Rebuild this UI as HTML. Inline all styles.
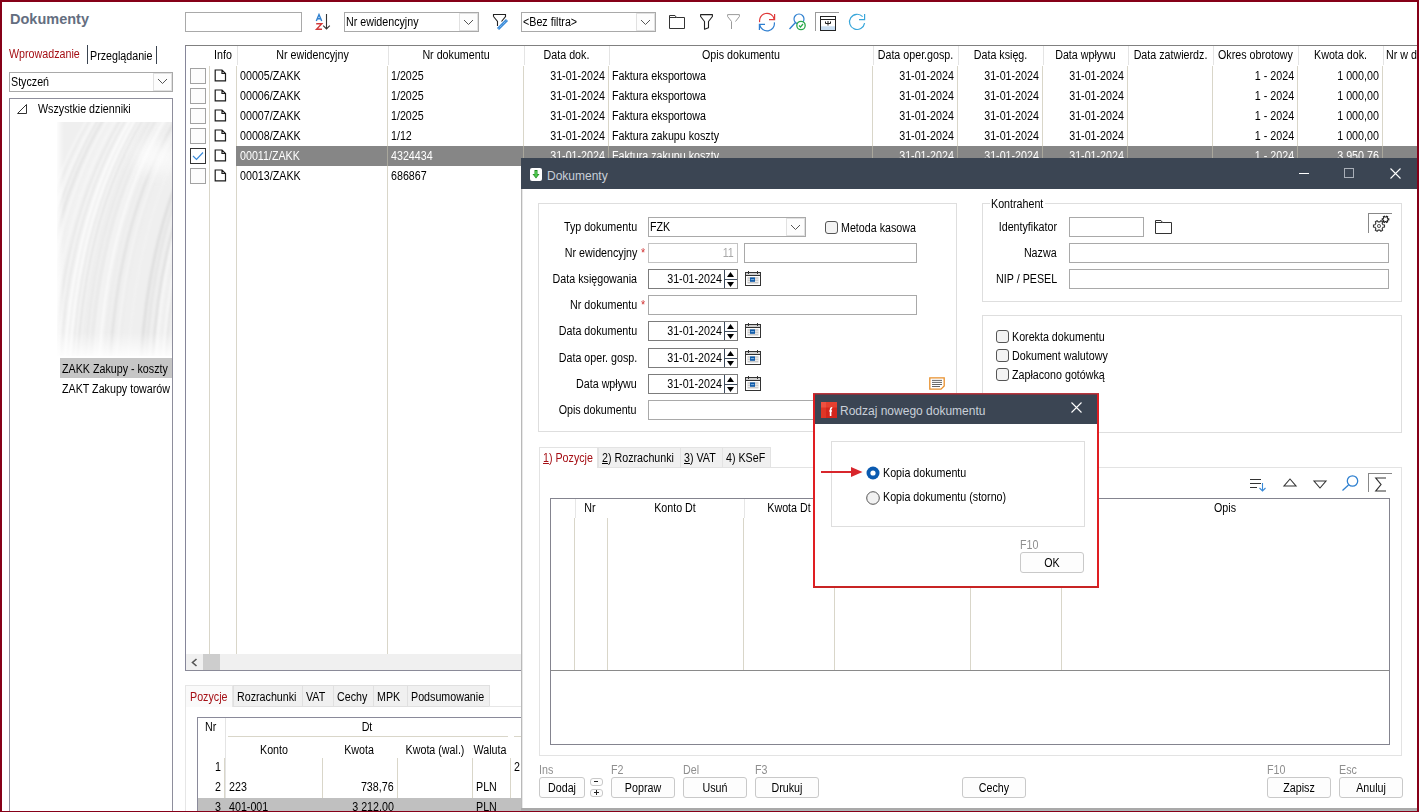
<!DOCTYPE html>
<html><head><meta charset="utf-8">
<style>
*{margin:0;padding:0;box-sizing:border-box}
html,body{width:1419px;height:812px;overflow:hidden;background:#fff}
body{position:relative;font-family:"Liberation Sans",sans-serif;font-size:11px;color:#000}
.a{position:absolute}
.t{position:absolute;white-space:nowrap;font-size:12.3px;line-height:14px;transform:scaleX(0.87);transform-origin:0 0}
.tr{transform-origin:100% 0}
.tc{transform-origin:50% 0}
.n{transform:none;font-size:12px;line-height:14px}
svg.a{overflow:visible}
</style></head><body>
<div class="t" style="top:12px;left:10px;color:#646e7f;font-size:14.5px;line-height:18px;font-weight:bold;transform:none;top:10px">Dokumenty</div>
<div class="t" style="top:47px;left:9px;color:#a50f15;">Wprowadzanie</div>
<div class="a" style="left:87px;top:45px;width:1px;height:19px;background:#3a4450;"></div>
<div class="t" style="top:49px;left:90px;">Przeglądanie</div>
<div class="a" style="left:156px;top:46px;width:1px;height:18px;background:#3a4450;"></div>
<div class="a" style="left:9px;top:72px;width:164px;height:20px;background:#fff;border:1px solid #a9a9a9;"></div>
<div class="a" style="left:153px;top:73px;width:19px;height:18px;background:#fdfdfd;border:1px solid #e1e1e1;"></div>
<svg class="a" style="left:157px;top:78px;" width="11" height="7" viewBox="0 0 11 7"><path d="M1 1 L5.5 5.5 L10 1" fill="none" stroke="#555" stroke-width="1"/></svg>
<div class="t" style="top:75px;left:11px;">Styczeń</div>
<div class="a" style="left:9px;top:98px;width:164px;height:730px;background:#fff;border:1px solid #8e8e9c;"></div>
<svg class="a" style="left:17px;top:104px;" width="11" height="10" viewBox="0 0 11 10"><path d="M9.5 0.5 L9.5 9.5 L0.5 9.5 Z" fill="none" stroke="#333" stroke-width="1"/></svg>
<div class="t" style="top:102px;left:38px;">Wszystkie dzienniki</div>
<svg class="a" style="left:57px;top:122px;overflow:hidden" width="115" height="234" viewBox="0 0 115 234"><defs><filter id="bl" filterUnits="userSpaceOnUse" x="-20" y="-20" width="155" height="274"><feGaussianBlur stdDeviation="0.8"/></filter><filter id="bl2" filterUnits="userSpaceOnUse" x="-20" y="-20" width="155" height="274"><feGaussianBlur stdDeviation="8"/></filter><linearGradient id="fl" x1="0" y1="0" x2="1" y2="0"><stop offset="0" stop-color="#fff" stop-opacity="0.8"/><stop offset="0.06" stop-color="#fff" stop-opacity="0"/></linearGradient><linearGradient id="fb" x1="0" y1="0" x2="0" y2="1"><stop offset="0" stop-color="#fff" stop-opacity="0"/><stop offset="0.9" stop-color="#fff" stop-opacity="0"/><stop offset="1" stop-color="#fff" stop-opacity="0.85"/></linearGradient></defs><rect width="115" height="234" fill="#efefef"/><g filter="url(#bl)"><path d="M15.1 240 Q23.1 90 85.1 -10" fill="none" stroke="#e0e0e0" stroke-width="1.23" opacity="0.38"/><path d="M99.6 240 Q107.6 90 169.6 -10" fill="none" stroke="#dadada" stroke-width="1.19" opacity="0.38"/><path d="M46.3 240 Q54.3 90 116.3 -10" fill="none" stroke="#dadada" stroke-width="0.74" opacity="0.58"/><path d="M0.9 240 Q8.9 90 70.9 -10" fill="none" stroke="#ffffff" stroke-width="1.28" opacity="0.80"/><path d="M-19.0 240 Q-11.0 90 51.0 -10" fill="none" stroke="#e0e0e0" stroke-width="1.61" opacity="0.67"/><path d="M-29.5 240 Q-21.5 90 40.5 -10" fill="none" stroke="#ffffff" stroke-width="1.23" opacity="0.89"/><path d="M-32.1 240 Q-24.1 90 37.9 -10" fill="none" stroke="#e0e0e0" stroke-width="1.06" opacity="0.43"/><path d="M-20.0 240 Q-12.0 90 50.0 -10" fill="none" stroke="#e4e4e4" stroke-width="1.50" opacity="0.73"/><path d="M-22.5 240 Q-14.5 90 47.5 -10" fill="none" stroke="#ffffff" stroke-width="1.62" opacity="0.55"/><path d="M53.1 240 Q61.1 90 123.1 -10" fill="none" stroke="#dadada" stroke-width="1.50" opacity="0.69"/><path d="M44.4 240 Q52.4 90 114.4 -10" fill="none" stroke="#ffffff" stroke-width="1.28" opacity="0.52"/><path d="M59.5 240 Q67.5 90 129.5 -10" fill="none" stroke="#ffffff" stroke-width="1.18" opacity="0.49"/><path d="M-9.4 240 Q-1.4 90 60.6 -10" fill="none" stroke="#e0e0e0" stroke-width="0.73" opacity="0.52"/><path d="M44.2 240 Q52.2 90 114.2 -10" fill="none" stroke="#e4e4e4" stroke-width="1.77" opacity="0.51"/><path d="M126.6 240 Q134.6 90 196.6 -10" fill="none" stroke="#dadada" stroke-width="1.42" opacity="0.44"/><path d="M18.1 240 Q26.1 90 88.1 -10" fill="none" stroke="#ffffff" stroke-width="1.27" opacity="0.88"/><path d="M-26.8 240 Q-18.8 90 43.2 -10" fill="none" stroke="#ffffff" stroke-width="1.52" opacity="0.83"/><path d="M13.3 240 Q21.3 90 83.3 -10" fill="none" stroke="#fafafa" stroke-width="1.16" opacity="0.62"/><path d="M95.5 240 Q103.5 90 165.5 -10" fill="none" stroke="#dadada" stroke-width="1.94" opacity="0.87"/><path d="M40.6 240 Q48.6 90 110.6 -10" fill="none" stroke="#fafafa" stroke-width="0.70" opacity="0.75"/><path d="M12.6 240 Q20.6 90 82.6 -10" fill="none" stroke="#ffffff" stroke-width="2.19" opacity="0.80"/><path d="M8.4 240 Q16.4 90 78.4 -10" fill="none" stroke="#ffffff" stroke-width="2.02" opacity="0.54"/><path d="M119.9 240 Q127.9 90 189.9 -10" fill="none" stroke="#e4e4e4" stroke-width="0.87" opacity="0.41"/><path d="M-30.0 240 Q-22.0 90 40.0 -10" fill="none" stroke="#e4e4e4" stroke-width="0.81" opacity="0.49"/><path d="M26.5 240 Q34.5 90 96.5 -10" fill="none" stroke="#ffffff" stroke-width="0.73" opacity="0.60"/><path d="M53.4 240 Q61.4 90 123.4 -10" fill="none" stroke="#e0e0e0" stroke-width="1.91" opacity="0.83"/><path d="M7.3 240 Q15.3 90 77.3 -10" fill="none" stroke="#ffffff" stroke-width="2.18" opacity="0.73"/><path d="M24.7 240 Q32.7 90 94.7 -10" fill="none" stroke="#e0e0e0" stroke-width="0.84" opacity="0.45"/><path d="M-0.6 240 Q7.4 90 69.4 -10" fill="none" stroke="#e0e0e0" stroke-width="0.62" opacity="0.81"/><path d="M-9.0 240 Q-1.0 90 61.0 -10" fill="none" stroke="#e4e4e4" stroke-width="0.61" opacity="0.58"/><path d="M22.8 240 Q30.8 90 92.8 -10" fill="none" stroke="#ffffff" stroke-width="1.11" opacity="0.42"/><path d="M106.1 240 Q114.1 90 176.1 -10" fill="none" stroke="#ffffff" stroke-width="1.65" opacity="0.76"/><path d="M37.6 240 Q45.6 90 107.6 -10" fill="none" stroke="#fafafa" stroke-width="1.88" opacity="0.57"/><path d="M27.8 240 Q35.8 90 97.8 -10" fill="none" stroke="#dadada" stroke-width="1.37" opacity="0.57"/><path d="M-7.6 240 Q0.4 90 62.4 -10" fill="none" stroke="#e0e0e0" stroke-width="1.31" opacity="0.41"/><path d="M62.1 240 Q70.1 90 132.1 -10" fill="none" stroke="#dadada" stroke-width="0.60" opacity="0.43"/><path d="M-22.8 240 Q-14.8 90 47.2 -10" fill="none" stroke="#e4e4e4" stroke-width="1.58" opacity="0.39"/><path d="M-4.6 240 Q3.4 90 65.4 -10" fill="none" stroke="#ffffff" stroke-width="0.84" opacity="0.49"/><path d="M19.1 240 Q27.1 90 89.1 -10" fill="none" stroke="#e4e4e4" stroke-width="1.36" opacity="0.41"/><path d="M43.0 240 Q51.0 90 113.0 -10" fill="none" stroke="#ffffff" stroke-width="1.37" opacity="0.52"/><path d="M-15.5 240 Q-7.5 90 54.5 -10" fill="none" stroke="#fafafa" stroke-width="1.15" opacity="0.50"/><path d="M100.9 240 Q108.9 90 170.9 -10" fill="none" stroke="#e0e0e0" stroke-width="1.43" opacity="0.46"/><path d="M121.8 240 Q129.8 90 191.8 -10" fill="none" stroke="#e4e4e4" stroke-width="0.83" opacity="0.65"/><path d="M-35.4 240 Q-27.4 90 34.6 -10" fill="none" stroke="#ffffff" stroke-width="1.08" opacity="0.70"/><path d="M-24.5 240 Q-16.5 90 45.5 -10" fill="none" stroke="#e4e4e4" stroke-width="1.43" opacity="0.85"/><path d="M20.5 240 Q28.5 90 90.5 -10" fill="none" stroke="#e0e0e0" stroke-width="1.45" opacity="0.78"/><path d="M16.0 240 Q24.0 90 86.0 -10" fill="none" stroke="#e0e0e0" stroke-width="1.58" opacity="0.78"/><path d="M88.9 240 Q96.9 90 158.9 -10" fill="none" stroke="#e0e0e0" stroke-width="1.89" opacity="0.80"/><path d="M85.8 240 Q93.8 90 155.8 -10" fill="none" stroke="#e0e0e0" stroke-width="0.92" opacity="0.62"/><path d="M84.3 240 Q92.3 90 154.3 -10" fill="none" stroke="#dadada" stroke-width="1.86" opacity="0.61"/><path d="M-7.1 240 Q0.9 90 62.9 -10" fill="none" stroke="#ffffff" stroke-width="2.13" opacity="0.60"/><path d="M119.3 240 Q127.3 90 189.3 -10" fill="none" stroke="#e4e4e4" stroke-width="2.13" opacity="0.55"/><path d="M-2.5 240 Q5.5 90 67.5 -10" fill="none" stroke="#e0e0e0" stroke-width="1.35" opacity="0.54"/><path d="M42.1 240 Q50.1 90 112.1 -10" fill="none" stroke="#ffffff" stroke-width="1.94" opacity="0.61"/><path d="M71.0 240 Q79.0 90 141.0 -10" fill="none" stroke="#fafafa" stroke-width="0.74" opacity="0.71"/><path d="M114.7 240 Q122.7 90 184.7 -10" fill="none" stroke="#fafafa" stroke-width="1.80" opacity="0.61"/><path d="M-9.7 240 Q-1.7 90 60.3 -10" fill="none" stroke="#fafafa" stroke-width="1.13" opacity="0.79"/><path d="M125.2 240 Q133.2 90 195.2 -10" fill="none" stroke="#ffffff" stroke-width="1.34" opacity="0.76"/><path d="M-25.6 240 Q-17.6 90 44.4 -10" fill="none" stroke="#e0e0e0" stroke-width="0.87" opacity="0.42"/><path d="M-14.3 240 Q-6.3 90 55.7 -10" fill="none" stroke="#ffffff" stroke-width="1.89" opacity="0.43"/><path d="M100.5 240 Q108.5 90 170.5 -10" fill="none" stroke="#ffffff" stroke-width="1.65" opacity="0.54"/><path d="M53.3 240 Q61.3 90 123.3 -10" fill="none" stroke="#e0e0e0" stroke-width="0.63" opacity="0.79"/><path d="M83.5 240 Q91.5 90 153.5 -10" fill="none" stroke="#dadada" stroke-width="1.44" opacity="0.86"/><path d="M33.7 240 Q41.7 90 103.7 -10" fill="none" stroke="#e0e0e0" stroke-width="1.92" opacity="0.47"/><path d="M2.8 240 Q10.8 90 72.8 -10" fill="none" stroke="#e4e4e4" stroke-width="1.40" opacity="0.77"/><path d="M15.4 240 Q23.4 90 85.4 -10" fill="none" stroke="#ffffff" stroke-width="1.27" opacity="0.42"/><path d="M114.7 240 Q122.7 90 184.7 -10" fill="none" stroke="#e4e4e4" stroke-width="2.04" opacity="0.71"/><path d="M98.6 240 Q106.6 90 168.6 -10" fill="none" stroke="#ffffff" stroke-width="1.27" opacity="0.85"/><path d="M45.3 240 Q53.3 90 115.3 -10" fill="none" stroke="#ffffff" stroke-width="0.84" opacity="0.63"/><path d="M108.4 240 Q116.4 90 178.4 -10" fill="none" stroke="#e0e0e0" stroke-width="1.57" opacity="0.78"/></g><ellipse cx="100" cy="35" rx="22" ry="16" fill="#fff" opacity="0.7" filter="url(#bl2)"/><rect width="115" height="234" fill="url(#fl)"/><rect width="115" height="234" fill="url(#fb)"/></svg>
<div class="a" style="left:60px;top:358px;width:112px;height:20px;background:#c6c6c6;"></div>
<div class="t" style="top:362px;left:62px;">ZAKK Zakupy - koszty</div>
<div class="t" style="top:382px;left:62px;">ZAKT Zakupy towarów</div>
<div class="a" style="left:185px;top:12px;width:117px;height:20px;background:#fff;border:1px solid #a9a9a9;"></div>
<svg class="a" style="left:315px;top:13px;" width="16" height="18" viewBox="0 0 16 18"><path d="M1.3 8 L4 1.5 L6.7 8 M2.2 5.8 H5.8" fill="none" stroke="#2f80d0" stroke-width="1.4"/><path d="M1.2 10.7 H6.8 L1.5 16.3 H7" fill="none" stroke="#d03a3a" stroke-width="1.4"/><path d="M11.5 1 V16 M8.2 12.7 L11.5 16 L14.8 12.7" fill="none" stroke="#333" stroke-width="1.1"/></svg>
<div class="a" style="left:344px;top:12px;width:135px;height:20px;background:#fff;border:1px solid #a9a9a9;"></div>
<div class="a" style="left:459px;top:13px;width:19px;height:18px;background:#fdfdfd;border:1px solid #e1e1e1;"></div>
<svg class="a" style="left:463px;top:19px;" width="11" height="7" viewBox="0 0 11 7"><path d="M1 1 L5.5 5.5 L10 1" fill="none" stroke="#555" stroke-width="1"/></svg>
<div class="t" style="top:15px;left:346px;">Nr ewidencyjny</div>
<svg class="a" style="left:492px;top:14px;" width="17" height="17" viewBox="0 0 17 17"><path d="M1.5 2.5 V0.5 H13.5 V2.5 L9.5 7.5 M1.5 2.5 L5.5 7.5 V12" fill="none" stroke="#222" stroke-width="1.1"/><path d="M6 15 L15 6" stroke="#3a8ad8" stroke-width="3"/><path d="M6.6 14.4 L14.4 6.6" stroke="#a8d8f8" stroke-width="0.8" stroke-dasharray="1 1"/></svg>
<div class="a" style="left:521px;top:12px;width:135px;height:20px;background:#fff;border:1px solid #a9a9a9;"></div>
<div class="a" style="left:636px;top:13px;width:19px;height:18px;background:#fdfdfd;border:1px solid #e1e1e1;"></div>
<svg class="a" style="left:640px;top:19px;" width="11" height="7" viewBox="0 0 11 7"><path d="M1 1 L5.5 5.5 L10 1" fill="none" stroke="#555" stroke-width="1"/></svg>
<div class="t" style="top:15px;left:523px;">&lt;Bez filtra&gt;</div>
<svg class="a" style="left:669px;top:15px;" width="16" height="14" viewBox="0 0 16 14"><path d="M0.5 13.5 V0.5 H6 L7.5 2.5 H15.5 V13.5 Z M0.5 2.5 H7.5" fill="none" stroke="#333" stroke-width="1"/></svg>
<svg class="a" style="left:700px;top:14px;" width="14" height="17" viewBox="0 0 14 17"><path d="M0.6 2.5 V0.6 H12.4 V2.5 L8.5 7.5 V13.8 L4.5 15.3 V7.5 Z" fill="none" stroke="#222" stroke-width="1.1" stroke-linejoin="round"/></svg>
<svg class="a" style="left:727px;top:14px;" width="14" height="17" viewBox="0 0 14 17"><path d="M0.6 2.5 V0.6 H12.4 V2.5 M0.6 2.5 L4.5 7.5 V15 M12.4 2.5 L8.5 7.5" fill="none" stroke="#9a9a9a" stroke-width="1" stroke-dasharray="20 0"/></svg>
<svg class="a" style="left:758px;top:13px;" width="18" height="18" viewBox="0 0 18 18"><path d="M1.7 9.2 A7.3 7.3 0 0 1 16.2 6.3" fill="none" stroke="#e03a3a" stroke-width="1.2"/><path d="M16.6 1 V6.6 H11" fill="none" stroke="#e03a3a" stroke-width="1.2"/><path d="M16.3 9.3 A7.3 7.3 0 0 1 1.8 11.8" fill="none" stroke="#2f7fd0" stroke-width="1.2"/><path d="M1.4 17 V11.4 H7" fill="none" stroke="#2f7fd0" stroke-width="1.2"/></svg>
<svg class="a" style="left:789px;top:13px;" width="17" height="18" viewBox="0 0 17 18"><circle cx="10" cy="6" r="5" fill="none" stroke="#2f80d0" stroke-width="1.2"/><path d="M6.5 9.5 L0.5 16" stroke="#2f80d0" stroke-width="1.3"/><circle cx="12" cy="12.5" r="4.2" fill="#fff" stroke="#2aa84a" stroke-width="1.3"/><path d="M10 12.5 L11.5 14 L14 11" fill="none" stroke="#2aa84a" stroke-width="1.2"/></svg>
<div class="a" style="left:815px;top:12px;width:1px;height:19px;background:#9a9a9a;"></div>
<div class="a" style="left:815px;top:12px;width:24px;height:1px;background:#9a9a9a;"></div>
<svg class="a" style="left:820px;top:16px;" width="16" height="15" viewBox="0 0 16 15"><rect x="0.5" y="0.5" width="15" height="14" fill="#fff" stroke="#222"/><rect x="1" y="10.3" width="14" height="3.7" fill="#c9def2"/><path d="M1 3.5 H15" stroke="#222"/><path d="M8 5 V9.5 M5.5 5.5 V7.5 H10.5 V5.5" fill="none" stroke="#222"/></svg>
<svg class="a" style="left:848px;top:13px;" width="18" height="18" viewBox="0 0 18 18"><path d="M14.6 3.6 A7.6 7.6 0 1 0 16.6 10.2" fill="none" stroke="#38a6da" stroke-width="1.2"/><path d="M16.6 1 V6.6 H11" fill="none" stroke="#38a6da" stroke-width="1.2"/></svg>
<div class="a" style="left:185px;top:45px;width:1240px;height:626px;background:#fff;border:1px solid #868699;border-right:none;border-top-color:#808080"></div>
<div class="a" style="left:237px;top:46px;width:1px;height:19px;background:#e4e4e4;"></div>
<div class="a" style="left:388px;top:46px;width:1px;height:19px;background:#e4e4e4;"></div>
<div class="a" style="left:524px;top:46px;width:1px;height:19px;background:#e4e4e4;"></div>
<div class="a" style="left:609px;top:46px;width:1px;height:19px;background:#e4e4e4;"></div>
<div class="a" style="left:873px;top:46px;width:1px;height:19px;background:#e4e4e4;"></div>
<div class="a" style="left:958px;top:46px;width:1px;height:19px;background:#e4e4e4;"></div>
<div class="a" style="left:1043px;top:46px;width:1px;height:19px;background:#e4e4e4;"></div>
<div class="a" style="left:1128px;top:46px;width:1px;height:19px;background:#e4e4e4;"></div>
<div class="a" style="left:1213px;top:46px;width:1px;height:19px;background:#e4e4e4;"></div>
<div class="a" style="left:1298px;top:46px;width:1px;height:19px;background:#e4e4e4;"></div>
<div class="a" style="left:1383px;top:46px;width:1px;height:19px;background:#e4e4e4;"></div>
<div class="a" style="left:209px;top:66px;width:1px;height:588px;background:#d9d6c9;"></div>
<div class="a" style="left:236px;top:66px;width:1px;height:588px;background:#d9d6c9;"></div>
<div class="a" style="left:387px;top:66px;width:1px;height:588px;background:#d9d6c9;"></div>
<div class="a" style="left:523px;top:66px;width:1px;height:588px;background:#d9d6c9;"></div>
<div class="a" style="left:608px;top:66px;width:1px;height:588px;background:#d9d6c9;"></div>
<div class="a" style="left:872px;top:66px;width:1px;height:588px;background:#d9d6c9;"></div>
<div class="a" style="left:957px;top:66px;width:1px;height:588px;background:#d9d6c9;"></div>
<div class="a" style="left:1042px;top:66px;width:1px;height:588px;background:#d9d6c9;"></div>
<div class="a" style="left:1127px;top:66px;width:1px;height:588px;background:#d9d6c9;"></div>
<div class="a" style="left:1212px;top:66px;width:1px;height:588px;background:#d9d6c9;"></div>
<div class="a" style="left:1297px;top:66px;width:1px;height:588px;background:#d9d6c9;"></div>
<div class="a" style="left:1382px;top:66px;width:1px;height:588px;background:#d9d6c9;"></div>
<div class="t tc" style="top:48px;left:199.0px;width:48px;text-align:center;">Info</div>
<div class="t tc" style="top:48px;left:227.0px;width:171px;text-align:center;">Nr ewidencyjny</div>
<div class="t tc" style="top:48px;left:378.0px;width:156px;text-align:center;">Nr dokumentu</div>
<div class="t tc" style="top:48px;left:514.0px;width:105px;text-align:center;">Data dok.</div>
<div class="t tc" style="top:48px;left:599.0px;width:284px;text-align:center;">Opis dokumentu</div>
<div class="t tc" style="top:48px;left:863.0px;width:105px;text-align:center;">Data oper.gosp.</div>
<div class="t tc" style="top:48px;left:948.0px;width:105px;text-align:center;">Data księg.</div>
<div class="t tc" style="top:48px;left:1033.0px;width:105px;text-align:center;">Data wpływu</div>
<div class="t tc" style="top:48px;left:1118.0px;width:105px;text-align:center;">Data zatwierdz.</div>
<div class="t tc" style="top:48px;left:1203.0px;width:105px;text-align:center;">Okres obrotowy</div>
<div class="t tc" style="top:48px;left:1288.0px;width:105px;text-align:center;">Kwota dok.</div>
<div class="t" style="top:48px;left:1386px;">Nr w d</div>
<div class="a" style="left:190px;top:68px;width:16px;height:16px;background:#fcfcfc;border:1px solid #a2a2a2;"></div>
<svg class="a" style="left:214px;top:69px;" width="13" height="13" viewBox="0 0 13 13"><path d="M1.2 1 H8 L11.5 4.5 V11.8 H1.2 Z M8 1 V4.5 H11.5" fill="none" stroke="#1a1a1a" stroke-width="1.2" stroke-linejoin="miter"/></svg>
<div class="t" style="top:69px;left:240px;">00005/ZAKK</div>
<div class="t" style="top:69px;left:391px;">1/2025</div>
<div class="t tr" style="top:69px;right:814px;">31-01-2024</div>
<div class="t" style="top:69px;left:612px;">Faktura eksportowa</div>
<div class="t tr" style="top:69px;right:465px;">31-01-2024</div>
<div class="t tr" style="top:69px;right:380px;">31-01-2024</div>
<div class="t tr" style="top:69px;right:295px;">31-01-2024</div>
<div class="t tr" style="top:69px;right:125px;">1 - 2024</div>
<div class="t tr" style="top:69px;right:40px;">1 000,00</div>
<div class="a" style="left:190px;top:88px;width:16px;height:16px;background:#fcfcfc;border:1px solid #a2a2a2;"></div>
<svg class="a" style="left:214px;top:89px;" width="13" height="13" viewBox="0 0 13 13"><path d="M1.2 1 H8 L11.5 4.5 V11.8 H1.2 Z M8 1 V4.5 H11.5" fill="none" stroke="#1a1a1a" stroke-width="1.2" stroke-linejoin="miter"/></svg>
<div class="t" style="top:89px;left:240px;">00006/ZAKK</div>
<div class="t" style="top:89px;left:391px;">1/2025</div>
<div class="t tr" style="top:89px;right:814px;">31-01-2024</div>
<div class="t" style="top:89px;left:612px;">Faktura eksportowa</div>
<div class="t tr" style="top:89px;right:465px;">31-01-2024</div>
<div class="t tr" style="top:89px;right:380px;">31-01-2024</div>
<div class="t tr" style="top:89px;right:295px;">31-01-2024</div>
<div class="t tr" style="top:89px;right:125px;">1 - 2024</div>
<div class="t tr" style="top:89px;right:40px;">1 000,00</div>
<div class="a" style="left:190px;top:108px;width:16px;height:16px;background:#fcfcfc;border:1px solid #a2a2a2;"></div>
<svg class="a" style="left:214px;top:109px;" width="13" height="13" viewBox="0 0 13 13"><path d="M1.2 1 H8 L11.5 4.5 V11.8 H1.2 Z M8 1 V4.5 H11.5" fill="none" stroke="#1a1a1a" stroke-width="1.2" stroke-linejoin="miter"/></svg>
<div class="t" style="top:109px;left:240px;">00007/ZAKK</div>
<div class="t" style="top:109px;left:391px;">1/2025</div>
<div class="t tr" style="top:109px;right:814px;">31-01-2024</div>
<div class="t" style="top:109px;left:612px;">Faktura eksportowa</div>
<div class="t tr" style="top:109px;right:465px;">31-01-2024</div>
<div class="t tr" style="top:109px;right:380px;">31-01-2024</div>
<div class="t tr" style="top:109px;right:295px;">31-01-2024</div>
<div class="t tr" style="top:109px;right:125px;">1 - 2024</div>
<div class="t tr" style="top:109px;right:40px;">1 000,00</div>
<div class="a" style="left:190px;top:128px;width:16px;height:16px;background:#fcfcfc;border:1px solid #a2a2a2;"></div>
<svg class="a" style="left:214px;top:129px;" width="13" height="13" viewBox="0 0 13 13"><path d="M1.2 1 H8 L11.5 4.5 V11.8 H1.2 Z M8 1 V4.5 H11.5" fill="none" stroke="#1a1a1a" stroke-width="1.2" stroke-linejoin="miter"/></svg>
<div class="t" style="top:129px;left:240px;">00008/ZAKK</div>
<div class="t" style="top:129px;left:391px;">1/12</div>
<div class="t tr" style="top:129px;right:814px;">31-01-2024</div>
<div class="t" style="top:129px;left:612px;">Faktura zakupu koszty</div>
<div class="t tr" style="top:129px;right:465px;">31-01-2024</div>
<div class="t tr" style="top:129px;right:380px;">31-01-2024</div>
<div class="t tr" style="top:129px;right:295px;">31-01-2024</div>
<div class="t tr" style="top:129px;right:125px;">1 - 2024</div>
<div class="t tr" style="top:129px;right:40px;">1 000,00</div>
<div class="a" style="left:236px;top:146px;width:1183px;height:20px;background:#868686;"></div>
<div class="a" style="left:387px;top:146px;width:1px;height:20px;background:#a9a79c;"></div>
<div class="a" style="left:523px;top:146px;width:1px;height:20px;background:#a9a79c;"></div>
<div class="a" style="left:608px;top:146px;width:1px;height:20px;background:#a9a79c;"></div>
<div class="a" style="left:872px;top:146px;width:1px;height:20px;background:#a9a79c;"></div>
<div class="a" style="left:957px;top:146px;width:1px;height:20px;background:#a9a79c;"></div>
<div class="a" style="left:1042px;top:146px;width:1px;height:20px;background:#a9a79c;"></div>
<div class="a" style="left:1127px;top:146px;width:1px;height:20px;background:#a9a79c;"></div>
<div class="a" style="left:1212px;top:146px;width:1px;height:20px;background:#a9a79c;"></div>
<div class="a" style="left:1297px;top:146px;width:1px;height:20px;background:#a9a79c;"></div>
<div class="a" style="left:1382px;top:146px;width:1px;height:20px;background:#a9a79c;"></div>
<div class="a" style="left:190px;top:148px;width:16px;height:16px;background:#fff;border:1px solid #333;"></div>
<svg class="a" style="left:192px;top:151px;" width="12" height="10" viewBox="0 0 12 10"><path d="M1 5 L4.5 8.5 L11 1.5" fill="none" stroke="#3a8ad8" stroke-width="1.2"/></svg>
<svg class="a" style="left:214px;top:149px;" width="13" height="13" viewBox="0 0 13 13"><path d="M1.2 1 H8 L11.5 4.5 V11.8 H1.2 Z M8 1 V4.5 H11.5" fill="none" stroke="#1a1a1a" stroke-width="1.2" stroke-linejoin="miter"/></svg>
<div class="t" style="top:149px;left:240px;color:#fff;">00011/ZAKK</div>
<div class="t" style="top:149px;left:391px;color:#fff;">4324434</div>
<div class="t tr" style="top:149px;right:814px;color:#fff;">31-01-2024</div>
<div class="t" style="top:149px;left:612px;color:#fff;">Faktura zakupu koszty</div>
<div class="t tr" style="top:149px;right:465px;color:#fff;">31-01-2024</div>
<div class="t tr" style="top:149px;right:380px;color:#fff;">31-01-2024</div>
<div class="t tr" style="top:149px;right:295px;color:#fff;">31-01-2024</div>
<div class="t tr" style="top:149px;right:125px;color:#fff;">1 - 2024</div>
<div class="t tr" style="top:149px;right:40px;color:#fff;">3 950,76</div>
<div class="a" style="left:190px;top:168px;width:16px;height:16px;background:#fcfcfc;border:1px solid #a2a2a2;"></div>
<svg class="a" style="left:214px;top:169px;" width="13" height="13" viewBox="0 0 13 13"><path d="M1.2 1 H8 L11.5 4.5 V11.8 H1.2 Z M8 1 V4.5 H11.5" fill="none" stroke="#1a1a1a" stroke-width="1.2" stroke-linejoin="miter"/></svg>
<div class="t" style="top:169px;left:240px;">00013/ZAKK</div>
<div class="t" style="top:169px;left:391px;">686867</div>
<div class="a" style="left:186px;top:654px;width:1233px;height:16px;background:#f0f0f0;"></div>
<div class="a" style="left:203px;top:654px;width:17px;height:16px;background:#cdcdcd;"></div>
<svg class="a" style="left:191px;top:658px;" width="7" height="9" viewBox="0 0 7 9"><path d="M5.5 1 L1.5 4.5 L5.5 8" fill="none" stroke="#555" stroke-width="1.6"/></svg>
<div class="a" style="left:185px;top:670px;width:1234px;height:1px;background:#8a8a98;"></div>
<div class="a" style="left:185px;top:685px;width:48px;height:22px;background:#fafafa;border:1px solid #e6e6e6;border-bottom:none"></div>
<div class="t" style="top:690px;left:190px;color:#a50f15;">Pozycje</div>
<div class="a" style="left:233px;top:685px;width:70px;height:22px;background:#f0f0f0;border:1px solid #e0e0e0;"></div>
<div class="t" style="top:690px;left:237px;">Rozrachunki</div>
<div class="a" style="left:302px;top:685px;width:32px;height:22px;background:#f0f0f0;border:1px solid #e0e0e0;"></div>
<div class="t" style="top:690px;left:306px;">VAT</div>
<div class="a" style="left:333px;top:685px;width:41px;height:22px;background:#f0f0f0;border:1px solid #e0e0e0;"></div>
<div class="t" style="top:690px;left:337px;">Cechy</div>
<div class="a" style="left:373px;top:685px;width:35px;height:22px;background:#f0f0f0;border:1px solid #e0e0e0;"></div>
<div class="t" style="top:690px;left:377px;">MPK</div>
<div class="a" style="left:407px;top:685px;width:83px;height:22px;background:#f0f0f0;border:1px solid #e0e0e0;"></div>
<div class="t" style="top:690px;left:411px;">Podsumowanie</div>
<div class="a" style="left:489px;top:706px;width:930px;height:1px;background:#e6e6e6;"></div>
<div class="a" style="left:185px;top:706px;width:1px;height:106px;background:#e6e6e6;"></div>
<div class="a" style="left:197px;top:717px;width:1300px;height:120px;background:#fff;border:1px solid #8a8a9a;"></div>
<div class="a" style="left:225px;top:718px;width:1px;height:94px;background:#e4e4e4;"></div>
<div class="a" style="left:228px;top:736px;width:280px;height:1px;background:#d9d6c9;"></div>
<div class="a" style="left:514px;top:736px;width:905px;height:1px;background:#d9d6c9;"></div>
<div class="t" style="top:720px;left:205px;">Nr</div>
<div class="t tc" style="top:720px;left:337.0px;width:60px;text-align:center;">Dt</div>
<div class="t tc" style="top:743px;left:229.0px;width:90px;text-align:center;">Konto</div>
<div class="t tc" style="top:743px;left:324.0px;width:70px;text-align:center;">Kwota</div>
<div class="t tc" style="top:743px;left:395.0px;width:80px;text-align:center;">Kwota (wal.)</div>
<div class="t tc" style="top:743px;left:470.0px;width:40px;text-align:center;">Waluta</div>
<div class="a" style="left:224px;top:758px;width:1px;height:54px;background:#d9d6c9;"></div>
<div class="a" style="left:322px;top:758px;width:1px;height:54px;background:#d9d6c9;"></div>
<div class="a" style="left:397px;top:758px;width:1px;height:54px;background:#d9d6c9;"></div>
<div class="a" style="left:472px;top:758px;width:1px;height:54px;background:#d9d6c9;"></div>
<div class="a" style="left:510px;top:758px;width:1px;height:54px;background:#d9d6c9;"></div>
<div class="a" style="left:198px;top:798px;width:1221px;height:14px;background:#c0c0c0;"></div>
<div class="t tr" style="top:760px;right:1198px;">1</div>
<div class="t" style="top:760px;left:514px;">2</div>
<div class="t tr" style="top:780px;right:1198px;">2</div>
<div class="t" style="top:780px;left:229px;">223</div>
<div class="t tr" style="top:780px;right:1025px;">738,76</div>
<div class="t" style="top:780px;left:476px;">PLN</div>
<div class="t tr" style="top:800px;right:1198px;">3</div>
<div class="t" style="top:800px;left:229px;">401-001</div>
<div class="t tr" style="top:800px;right:1025px;">3 212,00</div>
<div class="t" style="top:800px;left:476px;">PLN</div>
<div class="a" style="left:521px;top:158px;width:898px;height:653px;background:#fff;"></div>
<div class="a" style="left:521px;top:158px;width:1px;height:653px;background:#b9b9b9;"></div>
<div class="a" style="left:522px;top:189px;width:1px;height:621px;background:#e8e8e8;"></div>
<div class="a" style="left:521px;top:808px;width:898px;height:2px;background:#a9a9a9;"></div>
<div class="a" style="left:521px;top:810px;width:898px;height:1px;background:#abbaba;"></div>
<div class="a" style="left:521px;top:158px;width:898px;height:31px;background:#3b4553;"></div>
<div class="a" style="left:530px;top:168px;width:12px;height:13px;background:#fff;border-radius:2px"></div>
<svg class="a" style="left:532px;top:170px;" width="8" height="9" viewBox="0 0 8 9"><path d="M2.5 0 H5.5 V4 H7.5 L4 8.5 L0.5 4 H2.5 Z" fill="#1e8a1e"/><path d="M3 1 H5 V4.5 H6.5 L4 7.5 L1.5 4.5 H3 Z" fill="#4cc44c"/></svg>
<div class="t" style="top:169px;left:547px;color:#c9d0d9;font-size:12px;transform:none">Dokumenty</div>
<div class="a" style="left:1299px;top:173px;width:10px;height:1px;background:#ffffff;"></div>
<div class="a" style="left:1344px;top:168px;width:10px;height:10px;border:1px solid #a9afb8;"></div>
<svg class="a" style="left:1390px;top:168px;" width="11" height="11" viewBox="0 0 11 11"><path d="M0.5 0.5 L10.5 10.5 M10.5 0.5 L0.5 10.5" stroke="#fff" stroke-width="1.1"/></svg>
<div class="a" style="left:538px;top:203px;width:419px;height:229px;border:1px solid #dedede;"></div>
<div class="t tr" style="top:220px;right:782px;">Typ dokumentu</div>
<div class="t tr" style="top:246px;right:782px;">Nr ewidencyjny</div>
<div class="t" style="top:246px;left:641px;color:#d03030;">*</div>
<div class="t tr" style="top:272px;right:782px;">Data księgowania</div>
<div class="t tr" style="top:298px;right:782px;">Nr dokumentu</div>
<div class="t" style="top:298px;left:641px;color:#d03030;">*</div>
<div class="t tr" style="top:324px;right:782px;">Data dokumentu</div>
<div class="t tr" style="top:351px;right:782px;">Data oper. gosp.</div>
<div class="t tr" style="top:377px;right:782px;">Data wpływu</div>
<div class="t tr" style="top:403px;right:782px;">Opis dokumentu</div>
<div class="a" style="left:648px;top:217px;width:158px;height:20px;background:#fff;border:1px solid #a9a9a9;"></div>
<div class="a" style="left:786px;top:218px;width:19px;height:18px;background:#fdfdfd;border:1px solid #e1e1e1;"></div>
<svg class="a" style="left:790px;top:224px;" width="11" height="7" viewBox="0 0 11 7"><path d="M1 1 L5.5 5.5 L10 1" fill="none" stroke="#555" stroke-width="1"/></svg>
<div class="t" style="top:220px;left:650px;">FZK</div>
<div class="a" style="left:825px;top:221px;width:13px;height:13px;background:#f3f3f3;border:1px solid #555;border-radius:3px"></div>
<div class="t" style="top:221px;left:841px;">Metoda kasowa</div>
<div class="a" style="left:648px;top:243px;width:90px;height:20px;background:#fff;border:1px solid #c3c3c3;"></div>
<div class="t tr" style="top:246px;right:685px;color:#a8a8a8;">11</div>
<div class="a" style="left:744px;top:243px;width:173px;height:20px;background:#fff;border:1px solid #a9a9a9;"></div>
<div class="a" style="left:648px;top:269px;width:90px;height:20px;background:#fff;border:1px solid #7c7c7c;"></div>
<div class="a" style="left:724px;top:270px;width:1px;height:18px;background:#3c4a5c;"></div>
<div class="a" style="left:725px;top:279px;width:12px;height:1px;background:#3c4a5c;"></div>
<svg class="a" style="left:726px;top:271px;" width="10" height="16" viewBox="0 0 10 16"><path d="M1 6 L4.5 1 L8 6 Z" fill="#000"/><path d="M1 11 H8 L4.5 16 Z" fill="#000"/></svg>
<div class="t tr" style="top:272px;right:697px;">31-01-2024</div>
<svg class="a" style="left:745px;top:271px;" width="17" height="16" viewBox="0 0 17 16"><rect x="0.5" y="1.5" width="15" height="13" fill="#fff" stroke="#333"/><rect x="1" y="2" width="14" height="2.5" fill="#d0d0d0"/><path d="M1 4.5 H15" stroke="#333"/><path d="M3.5 0 V3 M12.5 0 V3" stroke="#333"/><rect x="2.5" y="6.2" width="11" height="6.3" fill="#c9c9c9"/><path d="M2.5 8.2 H13.5 M2.5 10.4 H13.5" stroke="#fff" stroke-width="0.7"/><rect x="5" y="6.4" width="5" height="4.4" fill="#0f5aa8"/><path d="M5.8 8.6 H9.2" stroke="#9cc8f0" stroke-width="0.8"/></svg>
<div class="a" style="left:648px;top:295px;width:269px;height:20px;background:#fff;border:1px solid #a9a9a9;"></div>
<div class="a" style="left:648px;top:321px;width:90px;height:20px;background:#fff;border:1px solid #7c7c7c;"></div>
<div class="a" style="left:724px;top:322px;width:1px;height:18px;background:#3c4a5c;"></div>
<div class="a" style="left:725px;top:331px;width:12px;height:1px;background:#3c4a5c;"></div>
<svg class="a" style="left:726px;top:323px;" width="10" height="16" viewBox="0 0 10 16"><path d="M1 6 L4.5 1 L8 6 Z" fill="#000"/><path d="M1 11 H8 L4.5 16 Z" fill="#000"/></svg>
<div class="t tr" style="top:324px;right:697px;">31-01-2024</div>
<svg class="a" style="left:745px;top:323px;" width="17" height="16" viewBox="0 0 17 16"><rect x="0.5" y="1.5" width="15" height="13" fill="#fff" stroke="#333"/><rect x="1" y="2" width="14" height="2.5" fill="#d0d0d0"/><path d="M1 4.5 H15" stroke="#333"/><path d="M3.5 0 V3 M12.5 0 V3" stroke="#333"/><rect x="2.5" y="6.2" width="11" height="6.3" fill="#c9c9c9"/><path d="M2.5 8.2 H13.5 M2.5 10.4 H13.5" stroke="#fff" stroke-width="0.7"/><rect x="5" y="6.4" width="5" height="4.4" fill="#0f5aa8"/><path d="M5.8 8.6 H9.2" stroke="#9cc8f0" stroke-width="0.8"/></svg>
<div class="a" style="left:648px;top:348px;width:90px;height:20px;background:#fff;border:1px solid #7c7c7c;"></div>
<div class="a" style="left:724px;top:349px;width:1px;height:18px;background:#3c4a5c;"></div>
<div class="a" style="left:725px;top:358px;width:12px;height:1px;background:#3c4a5c;"></div>
<svg class="a" style="left:726px;top:350px;" width="10" height="16" viewBox="0 0 10 16"><path d="M1 6 L4.5 1 L8 6 Z" fill="#000"/><path d="M1 11 H8 L4.5 16 Z" fill="#000"/></svg>
<div class="t tr" style="top:351px;right:697px;">31-01-2024</div>
<svg class="a" style="left:745px;top:350px;" width="17" height="16" viewBox="0 0 17 16"><rect x="0.5" y="1.5" width="15" height="13" fill="#fff" stroke="#333"/><rect x="1" y="2" width="14" height="2.5" fill="#d0d0d0"/><path d="M1 4.5 H15" stroke="#333"/><path d="M3.5 0 V3 M12.5 0 V3" stroke="#333"/><rect x="2.5" y="6.2" width="11" height="6.3" fill="#c9c9c9"/><path d="M2.5 8.2 H13.5 M2.5 10.4 H13.5" stroke="#fff" stroke-width="0.7"/><rect x="5" y="6.4" width="5" height="4.4" fill="#0f5aa8"/><path d="M5.8 8.6 H9.2" stroke="#9cc8f0" stroke-width="0.8"/></svg>
<div class="a" style="left:648px;top:374px;width:90px;height:20px;background:#fff;border:1px solid #7c7c7c;"></div>
<div class="a" style="left:724px;top:375px;width:1px;height:18px;background:#3c4a5c;"></div>
<div class="a" style="left:725px;top:384px;width:12px;height:1px;background:#3c4a5c;"></div>
<svg class="a" style="left:726px;top:376px;" width="10" height="16" viewBox="0 0 10 16"><path d="M1 6 L4.5 1 L8 6 Z" fill="#000"/><path d="M1 11 H8 L4.5 16 Z" fill="#000"/></svg>
<div class="t tr" style="top:377px;right:697px;">31-01-2024</div>
<svg class="a" style="left:745px;top:376px;" width="17" height="16" viewBox="0 0 17 16"><rect x="0.5" y="1.5" width="15" height="13" fill="#fff" stroke="#333"/><rect x="1" y="2" width="14" height="2.5" fill="#d0d0d0"/><path d="M1 4.5 H15" stroke="#333"/><path d="M3.5 0 V3 M12.5 0 V3" stroke="#333"/><rect x="2.5" y="6.2" width="11" height="6.3" fill="#c9c9c9"/><path d="M2.5 8.2 H13.5 M2.5 10.4 H13.5" stroke="#fff" stroke-width="0.7"/><rect x="5" y="6.4" width="5" height="4.4" fill="#0f5aa8"/><path d="M5.8 8.6 H9.2" stroke="#9cc8f0" stroke-width="0.8"/></svg>
<div class="a" style="left:648px;top:400px;width:269px;height:20px;background:#fff;border:1px solid #a9a9a9;"></div>
<svg class="a" style="left:929px;top:377px;" width="16" height="13" viewBox="0 0 16 13"><path d="M0.8 0.8 H15.2 V9 L12 12.2 H0.8 Z" fill="#fff" stroke="#e8902c" stroke-width="1.3"/><path d="M3 3.4 H13 M3 5.4 H13 M3 7.5 H13 M3 9.5 H11" stroke="#666" stroke-width="1"/></svg>
<div class="a" style="left:982px;top:203px;width:420px;height:99px;border:1px solid #dedede;"></div>
<div class="a" style="left:990px;top:198px;width:55px;height:12px;background:#fff;"></div>
<div class="t" style="top:197px;left:991px;">Kontrahent</div>
<div class="t tr" style="top:220px;right:362px;">Identyfikator</div>
<div class="a" style="left:1069px;top:217px;width:75px;height:20px;background:#fff;border:1px solid #a9a9a9;"></div>
<svg class="a" style="left:1155px;top:220px;" width="17" height="14" viewBox="0 0 17 14"><path d="M0.5 13.5 V0.5 H6 L7.5 2.5 H16.5 V13.5 Z M0.5 2.5 H7.5" fill="none" stroke="#333" stroke-width="1"/></svg>
<div class="t tr" style="top:246px;right:362px;">Nazwa</div>
<div class="a" style="left:1069px;top:243px;width:320px;height:20px;background:#fff;border:1px solid #a9a9a9;"></div>
<div class="t tr" style="top:272px;right:362px;">NIP / PESEL</div>
<div class="a" style="left:1069px;top:269px;width:320px;height:20px;background:#fff;border:1px solid #a9a9a9;"></div>
<div class="a" style="left:1368px;top:213px;width:1px;height:20px;background:#888;"></div>
<div class="a" style="left:1368px;top:213px;width:24px;height:1px;background:#888;"></div>
<svg class="a" style="left:1370px;top:216px;" width="20" height="18" viewBox="0 0 20 18"><path d="M12.99 8.68 L14.51 9.00 L14.51 11.00 L12.99 11.32 L12.14 12.79 L12.62 14.27 L10.89 15.27 L9.85 14.11 L8.15 14.11 L7.11 15.27 L5.38 14.27 L5.86 12.79 L5.01 11.32 L3.49 11.00 L3.49 9.00 L5.01 8.68 L5.86 7.21 L5.38 5.73 L7.11 4.73 L8.15 5.89 L9.85 5.89 L10.89 4.73 L12.62 5.73 L12.14 7.21 Z" fill="#fff" stroke="#333" stroke-width="1.1"/><rect x="7.6" y="8.6" width="2.8" height="2.8" rx="0.8" fill="none" stroke="#333" stroke-width="1"/><path d="M17.68 2.58 L18.75 2.71 L18.75 3.89 L17.68 4.02 L17.22 4.83 L17.63 5.82 L16.61 6.41 L15.97 5.55 L15.03 5.55 L14.39 6.41 L13.37 5.82 L13.78 4.83 L13.32 4.02 L12.25 3.89 L12.25 2.71 L13.32 2.58 L13.78 1.77 L13.37 0.78 L14.39 0.19 L15.03 1.05 L15.97 1.05 L16.61 0.19 L17.63 0.78 L17.22 1.77 Z" fill="#fff" stroke="#222" stroke-width="1.1"/><circle cx="15.5" cy="3.3" r="0.9" fill="#fff"/></svg>
<div class="a" style="left:982px;top:315px;width:420px;height:118px;border:1px solid #dedede;"></div>
<div class="a" style="left:996px;top:330px;width:13px;height:13px;background:#f3f3f3;border:1px solid #555;border-radius:3px"></div>
<div class="t" style="top:330px;left:1012px;">Korekta dokumentu</div>
<div class="a" style="left:996px;top:349px;width:13px;height:13px;background:#f3f3f3;border:1px solid #555;border-radius:3px"></div>
<div class="t" style="top:349px;left:1012px;">Dokument walutowy</div>
<div class="a" style="left:996px;top:368px;width:13px;height:13px;background:#f3f3f3;border:1px solid #555;border-radius:3px"></div>
<div class="t" style="top:368px;left:1012px;">Zapłacono gotówką</div>
<div class="a" style="left:539px;top:467px;width:863px;height:289px;border:1px solid #e3e3e3;"></div>
<div class="a" style="left:539px;top:447px;width:59px;height:21px;background:#fff;border:1px solid #e3e3e3;border-bottom:none"></div>
<div class="t" style="top:451px;left:543px;color:#a50f15;"><u>1</u>) Pozycje</div>
<div class="a" style="left:598px;top:447px;width:83px;height:21px;background:#f0f0f0;border:1px solid #e3e3e3;"></div>
<div class="t" style="top:451px;left:602px;"><u>2</u>) Rozrachunki</div>
<div class="a" style="left:680px;top:447px;width:43px;height:21px;background:#f0f0f0;border:1px solid #e3e3e3;"></div>
<div class="t" style="top:451px;left:684px;"><u>3</u>) VAT</div>
<div class="a" style="left:722px;top:447px;width:49px;height:21px;background:#f0f0f0;border:1px solid #e3e3e3;"></div>
<div class="t" style="top:451px;left:726px;">4) KSeF</div>
<svg class="a" style="left:1250px;top:478px;" width="17" height="14" viewBox="0 0 17 14"><path d="M0 1.5 H11 M0 5.5 H11 M0 9.5 H7" stroke="#333" stroke-width="1.1"/><path d="M12.5 5 V13 M9.5 10 L12.5 13 L15.5 10" fill="none" stroke="#3a8ad8" stroke-width="1.1"/></svg>
<svg class="a" style="left:1283px;top:478px;" width="14" height="9" viewBox="0 0 14 9"><path d="M7 1 L13 8 H1 Z" fill="none" stroke="#333" stroke-width="1.1"/></svg>
<svg class="a" style="left:1313px;top:480px;" width="14" height="9" viewBox="0 0 14 9"><path d="M1 1 H13 L7 8 Z" fill="none" stroke="#333" stroke-width="1.1"/></svg>
<svg class="a" style="left:1342px;top:475px;" width="17" height="16" viewBox="0 0 17 16"><circle cx="10.5" cy="6" r="5.2" fill="none" stroke="#2f80d0" stroke-width="1.3"/><path d="M6.5 10 L0.5 15.5" stroke="#2f80d0" stroke-width="1.3"/></svg>
<div class="a" style="left:1368px;top:473px;width:1px;height:19px;background:#888;"></div>
<div class="a" style="left:1368px;top:473px;width:24px;height:1px;background:#888;"></div>
<svg class="a" style="left:1375px;top:477px;" width="12" height="15" viewBox="0 0 12 15"><path d="M11 1 H0.8 L6 7.5 L0.8 14 H11" fill="none" stroke="#333" stroke-width="1.2"/></svg>
<div class="a" style="left:550px;top:498px;width:840px;height:247px;background:#fff;border:1px solid #84848f;"></div>
<div class="a" style="left:551px;top:670px;width:838px;height:1px;background:#8a8a8a;"></div>
<div class="a" style="left:575px;top:499px;width:1px;height:19px;background:#e6e6e6;"></div>
<div class="a" style="left:744px;top:499px;width:1px;height:19px;background:#e6e6e6;"></div>
<div class="a" style="left:574px;top:518px;width:1px;height:152px;background:#d9d6c9;"></div>
<div class="a" style="left:607px;top:518px;width:1px;height:152px;background:#d9d6c9;"></div>
<div class="a" style="left:743px;top:518px;width:1px;height:152px;background:#d9d6c9;"></div>
<div class="a" style="left:834px;top:518px;width:1px;height:152px;background:#d9d6c9;"></div>
<div class="a" style="left:970px;top:518px;width:1px;height:152px;background:#d9d6c9;"></div>
<div class="a" style="left:1061px;top:518px;width:1px;height:152px;background:#d9d6c9;"></div>
<div class="t tc" style="top:501px;left:570.0px;width:40px;text-align:center;">Nr</div>
<div class="t tc" style="top:501px;left:615.0px;width:120px;text-align:center;">Konto Dt</div>
<div class="t tc" style="top:501px;left:744.0px;width:90px;text-align:center;">Kwota Dt</div>
<div class="t tc" style="top:501px;left:1180.0px;width:90px;text-align:center;">Opis</div>
<div class="a" style="left:539px;top:777px;width:46px;height:21px;background:#fdfdfd;border:1px solid #c9c9c9;border-radius:3px"></div>
<div class="t tc" style="top:781px;left:539.0px;width:46px;text-align:center;">Dodaj</div>
<div class="t" style="top:763px;left:539px;color:#8f8f8f;">Ins</div>
<div class="a" style="left:590px;top:778px;width:13px;height:8px;background:#fdfdfd;border:1px solid #c9c9c9;border-radius:3px"></div>
<div class="a" style="left:590px;top:789px;width:13px;height:8px;background:#fdfdfd;border:1px solid #c9c9c9;border-radius:3px"></div>
<div class="a" style="left:594px;top:781px;width:4px;height:1px;background:#222;"></div>
<div class="a" style="left:594px;top:792px;width:5px;height:1px;background:#222;"></div>
<div class="a" style="left:596px;top:790px;width:1px;height:5px;background:#222;"></div>
<div class="a" style="left:611px;top:777px;width:64px;height:21px;background:#fdfdfd;border:1px solid #c9c9c9;border-radius:3px"></div>
<div class="t tc" style="top:781px;left:611.0px;width:64px;text-align:center;">Popraw</div>
<div class="t" style="top:763px;left:611px;color:#8f8f8f;">F2</div>
<div class="a" style="left:683px;top:777px;width:64px;height:21px;background:#fdfdfd;border:1px solid #c9c9c9;border-radius:3px"></div>
<div class="t tc" style="top:781px;left:683.0px;width:64px;text-align:center;">Usuń</div>
<div class="t" style="top:763px;left:683px;color:#8f8f8f;">Del</div>
<div class="a" style="left:755px;top:777px;width:64px;height:21px;background:#fdfdfd;border:1px solid #c9c9c9;border-radius:3px"></div>
<div class="t tc" style="top:781px;left:755.0px;width:64px;text-align:center;">Drukuj</div>
<div class="t" style="top:763px;left:755px;color:#8f8f8f;">F3</div>
<div class="a" style="left:962px;top:777px;width:64px;height:21px;background:#fdfdfd;border:1px solid #c9c9c9;border-radius:3px"></div>
<div class="t tc" style="top:781px;left:962.0px;width:64px;text-align:center;">Cechy</div>
<div class="a" style="left:1267px;top:777px;width:64px;height:21px;background:#fdfdfd;border:1px solid #c9c9c9;border-radius:3px"></div>
<div class="t tc" style="top:781px;left:1267.0px;width:64px;text-align:center;">Zapisz</div>
<div class="t" style="top:763px;left:1267px;color:#8f8f8f;">F10</div>
<div class="a" style="left:1339px;top:777px;width:64px;height:21px;background:#fdfdfd;border:1px solid #c9c9c9;border-radius:3px"></div>
<div class="t tc" style="top:781px;left:1339.0px;width:64px;text-align:center;">Anuluj</div>
<div class="t" style="top:763px;left:1339px;color:#8f8f8f;">Esc</div>
<div class="a" style="left:813px;top:393px;width:286px;height:195px;background:#fff;border:2px solid #e01e22;border-bottom-color:#c82424"></div>
<div class="a" style="left:813px;top:393px;width:286px;height:31px;background:#3b4553;"></div>
<div class="a" style="left:813px;top:393px;width:286px;height:1px;background:#b8383f;"></div>
<div class="a" style="left:815px;top:394px;width:282px;height:1px;background:#7c3440;"></div>
<div class="a" style="left:813px;top:394px;width:1px;height:30px;background:#e01e22;"></div>
<div class="a" style="left:814px;top:394px;width:1px;height:30px;background:#e01e22;"></div>
<div class="a" style="left:1097px;top:394px;width:1px;height:30px;background:#e01e22;"></div>
<div class="a" style="left:1098px;top:394px;width:1px;height:30px;background:#e01e22;"></div>
<svg class="a" style="left:821px;top:402px;" width="16" height="16" viewBox="0 0 16 16"><rect x="0" y="0" width="16" height="16" fill="#d4261c"/><rect x="0" y="0" width="16" height="5.5" fill="#e5402f"/><rect x="0" y="0" width="5" height="16" fill="#df3626"/><rect x="0" y="0" width="5" height="5.5" fill="#ee5040"/><path d="M11.2 6 Q9.8 5.6 9.6 7.2 V14 M8.3 9 H11" fill="none" stroke="#fff" stroke-width="1.6"/></svg>
<div class="t" style="top:404px;left:840px;color:#c9d0d9;font-size:12px;transform:none;top:404px">Rodzaj nowego dokumentu</div>
<svg class="a" style="left:1071px;top:402px;" width="11" height="11" viewBox="0 0 11 11"><path d="M0.5 0.5 L10.5 10.5 M10.5 0.5 L0.5 10.5" stroke="#fff" stroke-width="1.1"/></svg>
<div class="a" style="left:831px;top:441px;width:254px;height:86px;border:1px solid #dedede;"></div>
<svg class="a" style="left:866px;top:466px;" width="14" height="14" viewBox="0 0 14 14"><circle cx="7" cy="7" r="6.5" fill="#0a5ab0"/><circle cx="7" cy="7" r="2.6" fill="#fff"/></svg>
<div class="t" style="top:466px;left:883px;">Kopia dokumentu</div>
<svg class="a" style="left:866px;top:491px;" width="14" height="14" viewBox="0 0 14 14"><circle cx="7" cy="7" r="6.3" fill="#f2f2f2" stroke="#555" stroke-width="1"/></svg>
<div class="t" style="top:490px;left:883px;">Kopia dokumentu (storno)</div>
<div class="t" style="top:538px;left:1020px;color:#8f8f8f;">F10</div>
<div class="a" style="left:1020px;top:552px;width:64px;height:21px;background:#fdfdfd;border:1px solid #c9c9c9;border-radius:3px"></div>
<div class="t tc" style="top:556px;left:1020.0px;width:64px;text-align:center;">OK</div>
<svg class="a" style="left:821px;top:466px;" width="42" height="12" viewBox="0 0 42 12"><path d="M0 6 H33" stroke="#d8262c" stroke-width="1.8"/><path d="M30 1 L41.5 6 L30 11 Z" fill="#d8262c"/></svg>
<div class="a" style="left:0px;top:0px;width:1419px;height:2px;background:#860018;"></div>
<div class="a" style="left:0px;top:0px;width:2px;height:812px;background:#860018;"></div>
<div class="a" style="left:1417px;top:0px;width:2px;height:812px;background:#860018;"></div>
<div class="a" style="left:0px;top:811px;width:1419px;height:1px;background:#860018;"></div>
</body></html>
